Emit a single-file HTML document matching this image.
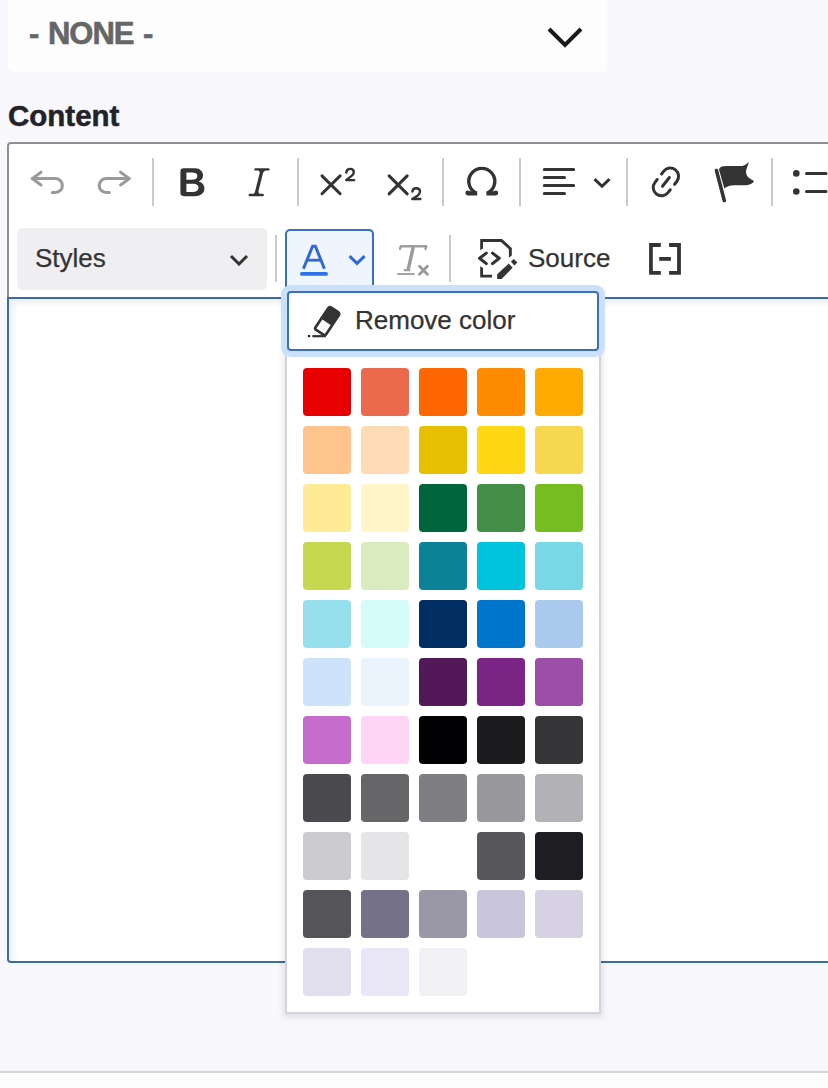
<!DOCTYPE html>
<html><head><meta charset="utf-8">
<style>
html,body{margin:0;padding:0;}
body{width:828px;height:1088px;position:relative;overflow:hidden;background:#f7f7fc;font-family:"Liberation Sans",sans-serif;}
.abs{position:absolute;}
#select{left:8px;top:-10px;width:599px;height:82px;background:#fdfdfd;border-radius:5px;}
#select .txt{position:absolute;left:21px;top:24px;font-size:31px;font-weight:bold;color:#666;line-height:40px;letter-spacing:-1px;word-spacing:2px;-webkit-text-stroke:0.6px #666;}
#label{left:8px;top:98px;font-size:29.5px;font-weight:bold;color:#222228;line-height:36px;-webkit-text-stroke:0.5px #222228;}
#editor{left:7px;top:142px;width:900px;height:820px;}
#tb{position:absolute;left:0;top:0;width:898px;height:155px;background:#fff;border:2px solid #8e8e93;border-bottom:none;border-radius:4px 4px 0 0;}
#tbline{position:absolute;left:0;top:155px;width:900px;height:2px;background:#3c69b0;}
#edit{position:absolute;left:0;top:157px;width:896px;height:662px;background:#fff;border:2px solid #3c69b0;border-top:none;border-radius:0 0 4px 4px;box-shadow:inset 4px 4px 6px rgba(0,0,0,0.07);}
.sep{position:absolute;width:2px;background:#c9c9c9;}
#bottomline{left:0;top:1071px;width:828px;height:2px;background:#d6d6da;}
#bottomfill{left:0;top:1073px;width:828px;height:15px;background:#fdfdfd;}
#styles{left:17px;top:228px;width:250px;height:62px;background:#efeff1;border-radius:5px;}
#styles .t{position:absolute;left:18px;top:15px;font-size:26px;color:#333;line-height:30px;-webkit-text-stroke:0.25px #333;}
#fc{left:285px;top:229px;width:85px;height:70px;background:#eff5fd;border:2px solid #3b6ec6;border-bottom:none;border-radius:5px 5px 0 0;}
.lbl{font-size:26px;color:#333;line-height:30px;-webkit-text-stroke:0.25px #333;}
#panel{left:285px;top:289px;width:312px;height:721px;background:#fff;border:2px solid #d4d3d7;box-shadow:0 2px 6px 2px rgba(0,0,0,0.09);}
#rc{left:287px;top:291px;width:308px;height:56px;background:#fff;border:2px solid #3a6fc0;border-radius:4px;box-shadow:0 0 0 6px #cbe0fa;}
.sw{position:absolute;width:48px;height:48px;border-radius:4px;}
</style></head>
<body>
<div id="select" class="abs"><div class="txt">- NONE -</div>
<svg class="abs" style="left:538px;top:35px" width="38" height="24" viewBox="0 0 38 24"><path d="M3 4 L19 20 L35 4" fill="none" stroke="#1a1a1a" stroke-width="4"/></svg>
</div>
<div id="label" class="abs">Content</div>
<div id="editor" class="abs">
  <div id="tb"></div>
  <div id="tbline"></div>
  <div id="edit"></div>
</div>
<div id="bottomline" class="abs"></div>
<div id="bottomfill" class="abs"></div>

<!-- row 1 separators -->
<div class="sep" style="left:152px;top:158px;height:48px"></div>
<div class="sep" style="left:297px;top:158px;height:48px"></div>
<div class="sep" style="left:442px;top:158px;height:48px"></div>
<div class="sep" style="left:519px;top:158px;height:48px"></div>
<div class="sep" style="left:626px;top:158px;height:48px"></div>
<div class="sep" style="left:771px;top:158px;height:48px"></div>
<!-- row 2 separators -->
<div class="sep" style="left:275px;top:235px;height:47px"></div>
<div class="sep" style="left:449px;top:235px;height:47px"></div>

<div id="styles" class="abs"><div class="t">Styles</div>
<svg class="abs" style="left:212px;top:26px" width="20" height="12" viewBox="0 0 20 12"><path d="M2 2 L10 10 L18 2" fill="none" stroke="#333" stroke-width="3"/></svg>
</div>
<div id="fc" class="abs"></div>

<svg class="abs" style="left:0;top:0;z-index:5" width="828" height="1088" viewBox="0 0 828 1088" fill="none">
<g stroke="#9a9a9a" stroke-width="3" stroke-linecap="round" stroke-linejoin="round">
<path d="M41 172.2 L32.2 178.6 L41 185"/><path d="M32.5 178.6 H55.5 A6.9 6.9 0 0 1 55.5 192.4 H52.3"/>
<path d="M120.6 172.2 L129.4 178.6 L120.6 185"/><path d="M129.1 178.6 H106.1 A6.9 6.9 0 0 0 106.1 192.4 H109.3"/>
</g>
<g fill="#333">
<path transform="translate(172.4 162.2) scale(2)" d="M10.187 17H5.773c-.637 0-1.092-.138-1.364-.415-.273-.277-.409-.718-.409-1.323V4.738c0-.617.14-1.062.419-1.332.279-.27.73-.406 1.354-.406h4.68c.69 0 1.288.041 1.793.124.506.083.96.242 1.36.478.341.197.644.447.906.75a3.262 3.262 0 0 1 .808 2.162c0 1.401-.722 2.426-2.167 3.075C15.050 10.175 16 11.315 16 13.010a3.756 3.756 0 0 1-2.296 3.504 6.1 6.1 0 0 1-1.517.377c-.571.073-1.238.11-2 .11zm-.217-6.217H7v4.087h3.069c1.977 0 2.965-.69 2.965-2.072 0-.707-.256-1.22-.768-1.537-.512-.319-1.277-.478-2.296-.478zM7 5.13v3.619h2.606c.729 0 1.292-.067 1.690-.2a1.6 1.6 0 0 0 .91-.765c.165-.267.247-.566.247-.897 0-.707-.26-1.176-.778-1.409-.519-.232-1.310-.348-2.375-.348H7z"/>
<path transform="translate(239.2 162.2) scale(2)" d="m9.586 14.633.021.004c-.036.335.095.655.393.962.082.083.173.15.274.201h1.474a.6.6 0 1 1 0 1.2H5.304a.6.6 0 0 1 0-1.2h1.15c.474-.07.809-.182 1.005-.334.157-.122.291-.32.404-.597l2.416-9.55a1.053 1.053 0 0 0-.281-.823 1.12 1.12 0 0 0-.442-.296H8.15a.6.6 0 0 1 0-1.2h6.443a.6.6 0 1 1 0 1.2h-1.195c-.376.056-.65.155-.823.296-.215.175-.423.439-.623.79l-2.366 9.347z"/>
</g>
<g stroke="#333" stroke-linecap="round" stroke-linejoin="round">
<path stroke-width="3" d="M322 175.9 L340.1 193.7 M340.1 175.9 L322 193.7"/>
<path stroke-width="2.4" d="M346.3 172.6 C346.5 170.2 348.1 168.9 350.1 168.9 C352.3 168.9 353.8 170.3 353.8 172.2 C353.8 173.9 352.8 175 351.3 176.1 L346.2 180.1 H354.2"/>
<path stroke-width="3" d="M389.1 175.9 L407.2 193.9 M407.2 175.9 L389.1 193.9"/>
<path stroke-width="2.4" d="M412.4 191.6 C412.6 189.3 414.3 188.3 416.2 188.3 C418.4 188.3 420 189.7 420 191.7 C420 193.4 419 194.5 417.5 195.7 L412.3 199 H420.4"/>
<path stroke-width="3.4" d="M475.2 192.6 A13 13 0 1 1 488.4 192.6"/>
<path stroke-width="4.2" stroke-linecap="butt" d="M468 193.4 H477.2 M486.4 193.4 H495.6"/>
<circle cx="467.8" cy="193" r="2.4" fill="#333" stroke="none"/><circle cx="495.8" cy="193" r="2.4" fill="#333" stroke="none"/>
<path stroke-width="3" d="M544.3 169.4 H573.7 M544.3 177.5 H564.5 M544.3 185.4 H573.7 M544.3 193.4 H564.5"/>
<path stroke-width="3" stroke-linecap="butt" stroke-linejoin="miter" d="M594.5 179.2 L602 186.3 L609.5 179.2"/>
<circle cx="796.3" cy="173.4" r="3.3" fill="#333" stroke="none"/><circle cx="796.3" cy="191.5" r="3.3" fill="#333" stroke="none"/>
<path stroke-width="3" d="M806.5 173.4 H826 M806.5 191.5 H826"/>
</g>
<g stroke="#3069d2" stroke-linecap="round" stroke-linejoin="round">
<path stroke-width="3" stroke-linecap="butt" stroke-linejoin="miter" d="M303.4 268.7 L312.6 246.3 H315.4 L324.4 268.7"/>
<path stroke-width="2.8" stroke-linecap="butt" d="M306.8 260.2 H321"/>
<path stroke-width="3.8" stroke="#2e72ea" d="M301.9 273.9 H326.1"/>
<path stroke-width="3" stroke-linecap="butt" stroke-linejoin="miter" d="M349.6 256.2 L357 263.4 L364.6 256.2"/>
</g>
<g stroke="#9a9a9a" stroke-linecap="round" stroke-linejoin="round">
<path stroke-width="2.4" stroke-linecap="butt" d="M400.5 246.3 H426.5"/>
<path stroke-width="2.2" d="M400.6 246.4 L400 249 M426.5 246.4 L425.4 249"/>
<path stroke-width="3.4" stroke-linecap="butt" d="M413.3 247 L408.2 269.5"/>
<path stroke-width="2" stroke-linecap="butt" d="M403.8 270.2 H410.2"/>
<path stroke-width="1.8" stroke-linecap="butt" d="M397.2 274 H414.5"/>
<path stroke-width="2.8" d="M419.5 266.3 L427.4 274.3 M427.4 266.3 L419.5 274.3"/>
</g>
<path fill="#333" d="M480.2 250.2 V239.1 H502 L511.8 247.9 V255.4 L508.9 257.8 V249.2 L500.9 241.9 H483 V248.4 Z"/>
<path fill="#333" d="M480.2 266.2 L483 268.1 V274.8 H492 V277.6 H480.2 Z"/>
<path stroke="#333" stroke-width="3.1" stroke-linecap="round" stroke-linejoin="round" d="M486.3 253.1 L479.6 258.3 L486.3 263.6 M492.5 253.1 L499.2 258.3 L492.5 263.6"/>
<g fill="#333">
<path d="M497.2 279 L497.2 274.2 L508.8 263.6 L512.6 267.8 L501.6 279 Z"/>
<path d="M510.9 261.6 L513.9 259.1 L517.3 262.6 L514.4 265.5 Z"/>
<path d="M649.1 243.1 H660.8 V246.9 H652.8 V271.1 H660.8 V274.8 H649.1 Z"/>
<path d="M680.9 243.1 H669.1 V246.9 H677.1 V271.1 H669.1 V274.8 H680.9 Z"/>
<rect x="659.2" y="257" width="11.7" height="3.8"/>

<path d="M719 169.5 C719.5 167.5 721 166.5 723.5 166.3 C730 165.8 737 166.2 742.5 165.9 C745 165.4 747 163.8 748.8 162 C748.5 164.5 746.5 168 746 171 C745.8 174 747 176 748.5 177.5 C750.5 179 752.5 180 754 181.2 C752.5 183.5 750.5 184.5 747.5 185 C742 185.5 736 184.8 731 185.5 C728 186 726 187 724.3 188.5 Z"/>
</g>
<g transform="translate(665.9 181.9) rotate(38.3)" fill="none" stroke="#333" stroke-width="3" stroke-linecap="round"><path d="M-8.3 -3.5 V-7.1 A8.3 8.3 0 0 1 8.3 -7.1 V-3.5 M-8.3 3.5 V7.1 A8.3 8.3 0 0 0 8.3 7.1 V3.5 M0 -5.6 V5.5"/></g>
<path d="M716.5 170.6 L724.3 200.6" stroke="#333" stroke-width="3.6" stroke-linecap="round"/>
<g transform="translate(327.3 321) rotate(33.7)">
<path fill="#333" d="M-7.7 1.4 V-10.8 A4 4 0 0 1 -3.7 -14.8 H3.7 A4 4 0 0 1 7.7 -10.8 V1.4 Z"/>
<path fill="none" stroke="#333" stroke-width="2.7" d="M-6.35 0.8 V11.6 A2 2 0 0 0 -4.35 13.6 H4.35 A2 2 0 0 0 6.35 11.6 V0.8"/>
</g>
<rect x="308" y="335" width="2.2" height="2.2" fill="#222"/>
<rect x="312.3" y="335.1" width="13.6" height="2.2" fill="#333"/>
</svg>

<div class="abs lbl" style="left:528px;top:243px">Source</div>

<div id="panel" class="abs"></div>
<div id="rc" class="abs"></div>
<div class="abs lbl" style="left:355px;top:305px">Remove color</div>

<div id="swatches">
<div class="sw" style="left:303px;top:368px;background:#e60000"></div>
<div class="sw" style="left:361px;top:368px;background:#eb6a4e"></div>
<div class="sw" style="left:419px;top:368px;background:#ff6600"></div>
<div class="sw" style="left:477px;top:368px;background:#ff8c00"></div>
<div class="sw" style="left:535px;top:368px;background:#ffaa00"></div>
<div class="sw" style="left:303px;top:426px;background:#ffc48c"></div>
<div class="sw" style="left:361px;top:426px;background:#ffdbb5"></div>
<div class="sw" style="left:419px;top:426px;background:#e6c000"></div>
<div class="sw" style="left:477px;top:426px;background:#ffd714"></div>
<div class="sw" style="left:535px;top:426px;background:#f5d850"></div>
<div class="sw" style="left:303px;top:484px;background:#ffeb96"></div>
<div class="sw" style="left:361px;top:484px;background:#fef5c8"></div>
<div class="sw" style="left:419px;top:484px;background:#00643c"></div>
<div class="sw" style="left:477px;top:484px;background:#448f48"></div>
<div class="sw" style="left:535px;top:484px;background:#77bc20"></div>
<div class="sw" style="left:303px;top:542px;background:#c6d850"></div>
<div class="sw" style="left:361px;top:542px;background:#dbebc0"></div>
<div class="sw" style="left:419px;top:542px;background:#0b8296"></div>
<div class="sw" style="left:477px;top:542px;background:#00c4dc"></div>
<div class="sw" style="left:535px;top:542px;background:#78d8e6"></div>
<div class="sw" style="left:303px;top:600px;background:#96e0ee"></div>
<div class="sw" style="left:361px;top:600px;background:#d6fbfb"></div>
<div class="sw" style="left:419px;top:600px;background:#002d62"></div>
<div class="sw" style="left:477px;top:600px;background:#0075cc"></div>
<div class="sw" style="left:535px;top:600px;background:#aacbee"></div>
<div class="sw" style="left:303px;top:658px;background:#cde3fc"></div>
<div class="sw" style="left:361px;top:658px;background:#ebf3fd"></div>
<div class="sw" style="left:419px;top:658px;background:#521858"></div>
<div class="sw" style="left:477px;top:658px;background:#7a2585"></div>
<div class="sw" style="left:535px;top:658px;background:#9b4fa8"></div>
<div class="sw" style="left:303px;top:716px;background:#c56ccc"></div>
<div class="sw" style="left:361px;top:716px;background:#ffd5f5"></div>
<div class="sw" style="left:419px;top:716px;background:#020104"></div>
<div class="sw" style="left:477px;top:716px;background:#1c1b1e"></div>
<div class="sw" style="left:535px;top:716px;background:#363537"></div>
<div class="sw" style="left:303px;top:774px;background:#4a494d"></div>
<div class="sw" style="left:361px;top:774px;background:#666568"></div>
<div class="sw" style="left:419px;top:774px;background:#7f7e82"></div>
<div class="sw" style="left:477px;top:774px;background:#98979b"></div>
<div class="sw" style="left:535px;top:774px;background:#b2b1b5"></div>
<div class="sw" style="left:303px;top:832px;background:#cccbce"></div>
<div class="sw" style="left:361px;top:832px;background:#e5e4e7"></div>
<div class="sw" style="left:419px;top:832px;background:#fefefe"></div>
<div class="sw" style="left:477px;top:832px;background:#58575b"></div>
<div class="sw" style="left:535px;top:832px;background:#1e1d21"></div>
<div class="sw" style="left:303px;top:890px;background:#555458"></div>
<div class="sw" style="left:361px;top:890px;background:#747189"></div>
<div class="sw" style="left:419px;top:890px;background:#9a98a6"></div>
<div class="sw" style="left:477px;top:890px;background:#c9c6dc"></div>
<div class="sw" style="left:535px;top:890px;background:#d6d2e4"></div>
<div class="sw" style="left:303px;top:948px;background:#e1deee"></div>
<div class="sw" style="left:361px;top:948px;background:#e9e7f5"></div>
<div class="sw" style="left:419px;top:948px;background:#f1f0f5"></div>
<div class="sw" style="left:477px;top:948px;background:#fefefe"></div>
<div class="sw" style="left:535px;top:948px;background:#fefefe"></div>
</div>
</body></html>
